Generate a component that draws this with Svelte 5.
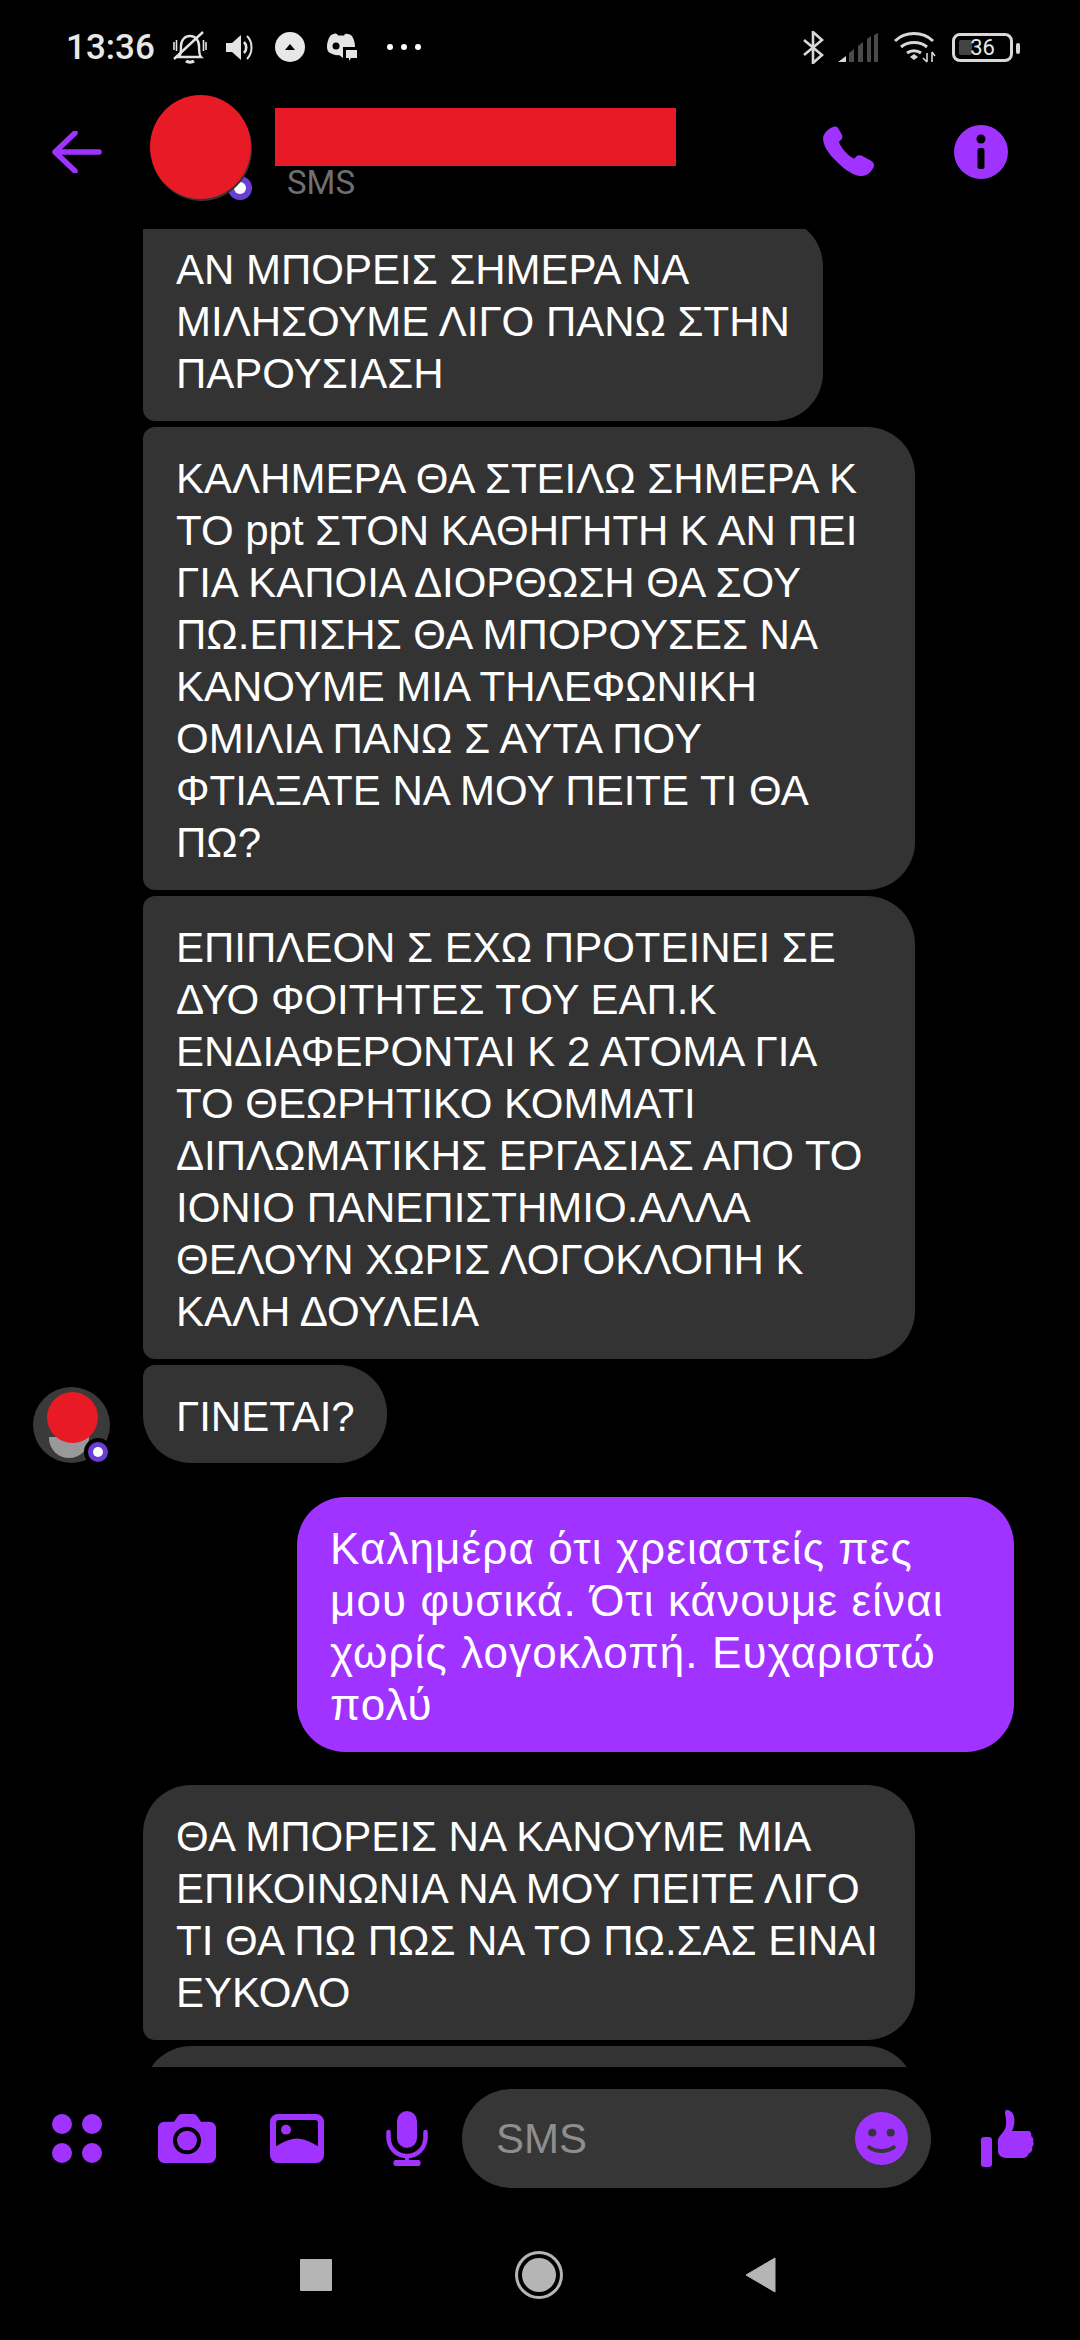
<script>
  const messages = [
    {
      lines: ["ΑΝ ΜΠΟΡΕΙΣ ΣΗΜΕΡΑ ΝΑ", "ΜΙΛΗΣΟΥΜΕ ΛΙΓΟ ΠΑΝΩ ΣΤΗΝ", "ΠΑΡΟΥΣΙΑΣΗ"],
      cls: "them clipped"
    },
    {
      lines: [
        "ΚΑΛΗΜΕΡΑ ΘΑ ΣΤΕΙΛΩ ΣΗΜΕΡΑ Κ",
        "ΤΟ ppt ΣΤΟΝ ΚΑΘΗΓΗΤΗ Κ ΑΝ ΠΕΙ",
        "ΓΙΑ ΚΑΠΟΙΑ ΔΙΟΡΘΩΣΗ ΘΑ ΣΟΥ",
        "ΠΩ.ΕΠΙΣΗΣ ΘΑ ΜΠΟΡΟΥΣΕΣ ΝΑ",
        "ΚΑΝΟΥΜΕ ΜΙΑ ΤΗΛΕΦΩΝΙΚΗ",
        "ΟΜΙΛΙΑ ΠΑΝΩ Σ ΑΥΤΑ ΠΟΥ",
        "ΦΤΙΑΞΑΤΕ ΝΑ ΜΟΥ ΠΕΙΤΕ ΤΙ ΘΑ",
        "ΠΩ?"
      ],
      cls: "them wide"
    },
    {
      lines: [
        "ΕΠΙΠΛΕΟΝ Σ ΕΧΩ ΠΡΟΤΕΙΝΕΙ ΣΕ",
        "ΔΥΟ ΦΟΙΤΗΤΕΣ ΤΟΥ ΕΑΠ.Κ",
        "ΕΝΔΙΑΦΕΡΟΝΤΑΙ Κ 2 ΑΤΟΜΑ ΓΙΑ",
        "ΤΟ ΘΕΩΡΗΤΙΚΟ ΚΟΜΜΑΤΙ",
        "ΔΙΠΛΩΜΑΤΙΚΗΣ ΕΡΓΑΣΙΑΣ ΑΠΟ ΤΟ",
        "ΙΟΝΙΟ ΠΑΝΕΠΙΣΤΗΜΙΟ.ΑΛΛΑ",
        "ΘΕΛΟΥΝ ΧΩΡΙΣ ΛΟΓΟΚΛΟΠΗ Κ",
        "ΚΑΛΗ ΔΟΥΛΕΙΑ"
      ],
      cls: "them wide"
    },
    { lines: ["ΓΙΝΕΤΑΙ?"], cls: "them last", avatar: true },
    {
      lines: [
        "Καλημέρα ότι χρειαστείς πες",
        "μου φυσικά. Ότι κάνουμε είναι",
        "χωρίς λογοκλοπή. Ευχαριστώ",
        "πολύ"
      ],
      cls: "me"
    },
    {
      lines: [
        "ΘΑ ΜΠΟΡΕΙΣ ΝΑ ΚΑΝΟΥΜΕ ΜΙΑ",
        "ΕΠΙΚΟΙΝΩΝΙΑ ΝΑ ΜΟΥ ΠΕΙΤΕ ΛΙΓΟ",
        "ΤΙ ΘΑ ΠΩ ΠΩΣ ΝΑ ΤΟ ΠΩ.ΣΑΣ ΕΙΝΑΙ",
        "ΕΥΚΟΛΟ"
      ],
      cls: "them wide first"
    },
    { lines: [""], cls: "them wide first" }
  ];
</script>

<div class="screen">
  <div class="status">
    <span class="time">13:36</span>
    <svg class="bell" width="34" height="33" viewBox="0 0 34 33" fill="none" stroke="#e4e4e4" stroke-width="2.400">
      <path d="M6 26c2-2 2-6 2-11 0-6 4-10 9-10s9 4 9 10c0 5 0 9 2 11z" />
      <path d="M13 30c2 1.500 6 1.500 8 0" stroke-width="3" />
      <path d="M1 11v8M3.500 9v11M30.500 9v11M33 11v8" stroke-width="1.600" />
      <path d="M1 28L30 1" />
    </svg>
    <svg class="speaker" width="28" height="27" viewBox="0 0 28 27">
      <path d="M0 9h6l9-8v25l-9-8H0z" fill="#e4e4e4" />
      <path d="M18 8c3 3 3 8 0 11" fill="none" stroke="#e4e4e4" stroke-width="2.600" />
      <path d="M21 2c6 6 6 17 0 23" fill="none" stroke="#e4e4e4" stroke-width="2" />
    </svg>
    <svg class="upload" width="30" height="30" viewBox="0 0 30 30">
      <circle cx="15" cy="15" r="15" fill="#e8e8e8" />
      <path d="M10 18l5-6 5 6z" fill="#000" />
    </svg>
    <svg class="discord" width="32" height="31" viewBox="0 0 32 31">
      <path d="M6 3c3-1.500 5-2 6-1l1 1.500h6L20 2c2-.5 5 .5 7 2 2 3 3 7 3 11h-9v9l-3 2-4-3c-3 1-6-1-9-2-2-1-3-3-3-6 0-5 2-10 4-12z" fill="#e4e4e4" />
      <circle cx="11" cy="14" r="3.500" fill="#000" />
      <path d="M18 15h14v12h-8l-2 4v-4h-4z" fill="#000" />
      <path d="M21 18h11v8h-6l-2 3v-3h-3z" fill="#e4e4e4" />
    </svg>
    <span class="more">
      <i></i><i></i><i></i>
    </span>

    <span class="status-right">
      <svg width="21" height="33" viewBox="0 0 21 33" fill="none" stroke="#d8d8d8" stroke-width="2.600">
        <path d="M1 9l18 15-9 8V1l9 8L1 24" />
      </svg>
      <svg class="signal" width="40" height="29" viewBox="0 0 40 29">
        <path d="M0 29l8-6v6z" fill="#d8d8d8" />
        <path d="M11 20l5-4v13h-5zM20 13l5-4v20h-5zM29 6l4-3v26h-4zM36 2l4-2v29h-4z" fill="#4a4a4a" />
      </svg>
      <svg class="wifi" width="42" height="32" viewBox="0 0 42 32" fill="none" stroke="#d8d8d8" stroke-width="3">
        <path d="M1 10c10-10 28-10 38 0" />
        <path d="M7 16c7-6 19-6 26 0" />
        <path d="M13 22c4-3 10-3 14 0" />
        <path d="M16 26l4-3 4 3-4 3z" fill="#d8d8d8" stroke="none" />
        <path d="M33 22v9M29 27l4 4M38 21v10M38 21l3 4" stroke-width="1.600" />
      </svg>
      <span class="battery">
        <span class="battery-fill"></span>
        <span class="battery-num">36</span>
        <span class="battery-tip"></span>
      </span>
    </span>
  </div>

  <div class="header">
    <svg class="back" width="50" height="42" viewBox="0 0 50 42" fill="none" stroke="#a033ff" stroke-width="5.500" stroke-linecap="round" stroke-linejoin="round">
      <path d="M47 21H3M23 2L3 21l20 19" />
    </svg>
    <div class="avatar">
      <span class="badge big"><i></i></span>
      <span class="avatar-face"></span>
    </div>
    <div class="title">
      <div class="name"></div>
      <div class="sub">SMS</div>
    </div>
    <svg class="phone" width="52" height="52" viewBox="0 0 52 54" preserveAspectRatio="none">
      <path d="M10 1c3-1 5 0 6 3l3 5c1 3 0 5-2 6l-1 2c2 6 9 14 15 17l2-2c2-2 4-2 6-1l9 5c3 2 4 5 2 8-2 4-6 8-11 8-8 0-18-7-25-15C5 29 0 20 0 12 1 7 5 3 10 1z" fill="#a033ff" />
    </svg>
    <svg class="info" width="54" height="54" viewBox="0 0 54 54">
      <circle cx="27" cy="27" r="27" fill="#a033ff" />
      <circle cx="27" cy="14" r="4.500" fill="#000" />
      <rect x="23.500" y="23" width="7" height="21" rx="2.500" fill="#000" />
    </svg>
  </div>

  <div class="chat">
    {#each messages as m}
      <div class="row {m.cls}">
        {#if m.avatar}
          <div class="mini">
            <span class="mini-face"></span>
            <span class="mini-body"></span>
            <span class="badge small"><i></i></span>
          </div>
        {/if}
        <div class="bubble">
          {#each m.lines as line}
            <div>{line}&nbsp;</div>
          {/each}
        </div>
      </div>
    {/each}
  </div>

  <div class="composer">
    <svg class="apps" width="50" height="49" viewBox="0 0 50 49">
      <circle cx="10" cy="10" r="10" fill="#a033ff" />
      <circle cx="40" cy="10" r="10" fill="#a033ff" />
      <circle cx="10" cy="39" r="10" fill="#a033ff" />
      <circle cx="40" cy="39" r="10" fill="#a033ff" />
    </svg>
    <svg class="camera" width="58" height="49" viewBox="0 0 58 50" preserveAspectRatio="none">
      <path d="M7 8h9l4-6c1-1 2-2 4-2h11c2 0 3 1 4 2l4 6h8c4 0 7 3 7 6v29c0 4-3 7-7 7H7c-4 0-7-3-7-7V14c0-3 3-6 7-6z" fill="#a033ff" />
      <circle cx="29" cy="27" r="14" fill="#000" />
      <circle cx="29" cy="27" r="10" fill="#a033ff" />
    </svg>
    <svg class="image" width="54" height="49" viewBox="0 0 54 50" preserveAspectRatio="none">
      <rect width="54" height="50" rx="8" fill="#a033ff" />
      <path d="M6 9c0-2 1-3 3-3h36c2 0 3 1 3 3v24c-6-4-14-8-21-8s-15 4-21 8z" fill="#000" />
      <circle cx="16" cy="16" r="5" fill="#a033ff" />
    </svg>
    <svg class="mic" width="42" height="55" viewBox="0 0 42 55">
      <rect x="11" width="20" height="37" rx="10" fill="#a033ff" />
      <path d="M2.500 21v5c0 11 8 19 18.500 19s18.500-8 18.500-19v-5" fill="none" stroke="#a033ff" stroke-width="4.500" stroke-linecap="round" />
      <path d="M21 45v6" stroke="#a033ff" stroke-width="4" />
      <rect x="7.500" y="49" width="27" height="6" rx="2" fill="#a033ff" />
    </svg>
    <div class="input">
      <span>SMS</span>
      <svg width="53" height="53" viewBox="0 0 52 54" preserveAspectRatio="none">
        <ellipse cx="26" cy="27" rx="26" ry="27" fill="#a033ff" />
        <circle cx="17" cy="21" r="4" fill="#363636" />
        <circle cx="35" cy="21" r="4" fill="#363636" />
        <path d="M14 36c6 5 18 5 24 0" fill="none" stroke="#363636" stroke-width="4" stroke-linecap="round" />
      </svg>
    </div>
    <svg class="thumb" width="54" height="57" viewBox="0 0 54 57">
      <rect y="27" width="11" height="30" rx="3" fill="#a033ff" />
      <path d="M26 0c3 0 6 2 7 7 1 5 0 10-2 14h16c3 0 4 3 3 5 2 1 3 3 2 5 1 2 1 4-1 6 1 3-1 6-3 6-1 3-3 5-7 5H26c-4 0-9-2-9-7V30c0-3 5-7 7-11 2-5 1-11 0-15 0-2 0-4 2-4z" fill="#a033ff" />
    </svg>
  </div>

  <div class="nav">
    <span class="nav-square"></span>
    <span class="nav-circle"></span>
    <svg class="nav-back" width="31" height="36" viewBox="0 0 31 36">
      <path d="M30 1v34L1 18z" fill="#b5b5b5" stroke="#b5b5b5" stroke-width="1" stroke-linejoin="round" />
    </svg>
  </div>
</div>

<style>
  :global(body) {
    margin: 0;
    background: #000;
  }

  .screen {
    width: 1080px;
    height: 2340px;
    background: #000;
    color: #fff;
    font-family: "Liberation Sans", Arial, sans-serif;
    display: flex;
    flex-direction: column;
    overflow: hidden;
  }

  svg {
    flex: none;
  }

  /* status bar */
  .status {
    height: 94px;
    box-sizing: border-box;
    display: flex;
    align-items: center;
    padding-left: 66px;
    padding-right: 67px;
  }

  .time {
    font-family: Roboto, sans-serif;
    font-size: 35px;
    font-weight: 500;
    color: #e8e8e8;
  }

  .bell {
    margin-left: 18px;
  }

  .speaker {
    margin-left: 19px;
  }

  .upload {
    margin-left: 21px;
  }

  .discord {
    margin-left: 20px;
  }

  .more {
    display: flex;
    gap: 8px;
    margin-left: 30px;
  }

  .more i {
    width: 6px;
    height: 6px;
    border-radius: 50%;
    background: #fff;
  }

  .status-right {
    margin-left: auto;
    display: flex;
    align-items: center;
  }

  .signal {
    margin-left: 14px;
  }

  .wifi {
    margin-left: 16px;
  }

  .battery {
    position: relative;
    margin-left: 16px;
    width: 61px;
    height: 29px;
    box-sizing: border-box;
    border: 3px solid #d8d8d8;
    border-radius: 8px;
    display: flex;
    align-items: center;
    justify-content: center;
  }

  .battery-fill {
    position: absolute;
    left: 4px;
    top: 4px;
    bottom: 4px;
    width: 13px;
    background: #444;
    border-radius: 2px;
  }

  .battery-num {
    position: relative;
    font-family: Roboto, sans-serif;
    font-size: 22px;
    color: #e8e8e8;
  }

  .battery-tip {
    position: absolute;
    right: -10px;
    top: 7px;
    width: 4px;
    height: 11px;
    border-radius: 2px;
    background: #d8d8d8;
  }

  /* header */
  .header {
    height: 135px;
    display: flex;
    align-items: flex-start;
  }

  .back {
    margin-left: 52px;
    margin-top: 37px;
  }

  .avatar {
    position: relative;
    margin-left: 48px;
    margin-top: 1px;
    width: 101px;
    height: 104px;
  }

  .avatar-face {
    position: absolute;
    inset: 0;
    border-radius: 50%;
    background: #e71a26;
    box-shadow: 1px 2px 0 #333;
  }

  .badge {
    position: absolute;
    border-radius: 50%;
    background: #6a3fd6;
    display: flex;
    align-items: center;
    justify-content: center;
  }

  .badge i {
    background: #fff;
    border-radius: 50%;
  }

  .badge.big {
    right: -1px;
    bottom: -1px;
    width: 24px;
    height: 24px;
  }

  .badge.big i {
    width: 12px;
    height: 12px;
  }

  .title {
    margin-left: 24px;
    margin-top: 14px;
  }

  .name {
    width: 401px;
    height: 58px;
    background: #e71a26;
  }

  .sub {
    margin-left: 12px;
    font-family: Roboto, sans-serif;
    font-size: 33px;
    line-height: 34px;
    color: #6f6f6f;
  }

  .phone {
    margin-left: auto;
    margin-top: 32px;
  }

  .info {
    margin-left: 79px;
    margin-top: 31px;
    margin-right: 72px;
  }

  /* messages */
  .chat {
    height: 1838px;
    overflow: hidden;
    display: flex;
    flex-direction: column;
    gap: 6px;
    flex: none;
  }

  .row {
    position: relative;
    padding-left: 143px;
    display: flex;
    flex: none;
  }

  .bubble {
    box-sizing: border-box;
    padding: 26px 33px 21px;
    font-size: 42px;
    line-height: 52px;
    background: #333;
    border-radius: 12px 48px 48px 12px;
    white-space: nowrap;
  }

  .row.clipped {
    margin-top: -11px;
  }

  .row.clipped .bubble {
    width: 680px;
  }

  .row.wide .bubble {
    width: 772px;
  }

  .row.last .bubble {
    width: 244px;
    height: 98px;
    border-radius: 12px 48px 48px 48px;
  }

  .row.first .bubble {
    border-radius: 48px 48px 48px 12px;
  }

  .row.first {
    margin-top: 27px;
  }

  .row.first ~ .row.first {
    margin-top: 0;
  }

  .row.me {
    margin-top: 28px;
    padding-left: 297px;
  }

  .row.me .bubble {
    width: 717px;
    background: #a033ff;
    border-radius: 48px;
    font-size: 44px;
    letter-spacing: 1.1px;
  }

  .mini {
    position: absolute;
    left: 33px;
    top: 22px;
    width: 77px;
    height: 76px;
    border-radius: 50%;
    background: #3a3a3a;
  }

  .mini-face {
    position: absolute;
    left: 14px;
    top: 5px;
    width: 51px;
    height: 51px;
    border-radius: 50%;
    background: #e71a26;
    z-index: 1;
  }

  .mini-body {
    position: absolute;
    left: 16px;
    top: 50px;
    width: 40px;
    height: 21px;
    border-radius: 0 0 24px 24px;
    background: #999;
  }

  .badge.small {
    left: 51px;
    top: 51px;
    width: 20px;
    height: 20px;
    border: 4px solid #000;
    z-index: 2;
  }

  .badge.small i {
    width: 10px;
    height: 10px;
  }

  /* composer */
  .composer {
    height: 99px;
    margin-top: 22px;
    display: flex;
    align-items: center;
    flex: none;
  }

  .apps {
    margin-left: 52px;
  }

  .camera {
    margin-left: 56px;
  }

  .image {
    margin-left: 54px;
  }

  .mic {
    margin-left: 62px;
  }

  .input {
    margin-left: 34px;
    width: 469px;
    height: 99px;
    box-sizing: border-box;
    padding: 0 23px 0 34px;
    background: #363636;
    border-radius: 50px;
    display: flex;
    align-items: center;
    justify-content: space-between;
    flex: none;
  }

  .input span {
    font-size: 42px;
    color: #8e8e8e;
  }

  .thumb {
    margin-left: 50px;
    margin-top: -1px;
  }

  /* android nav */
  .nav {
    height: 152px;
    box-sizing: border-box;
    padding-top: 22px;
    display: flex;
    align-items: center;
    flex: none;
  }

  .nav-square {
    margin-left: 300px;
    width: 32px;
    height: 32px;
    background: #b5b5b5;
    border-radius: 1px;
  }

  .nav-circle {
    margin-left: 190px;
    width: 34px;
    height: 34px;
    border-radius: 50%;
    background: #b5b5b5;
    box-shadow: 0 0 0 4px #000, 0 0 0 7px #b5b5b5;
  }

  .nav-back {
    margin-left: 189px;
  }
</style>
